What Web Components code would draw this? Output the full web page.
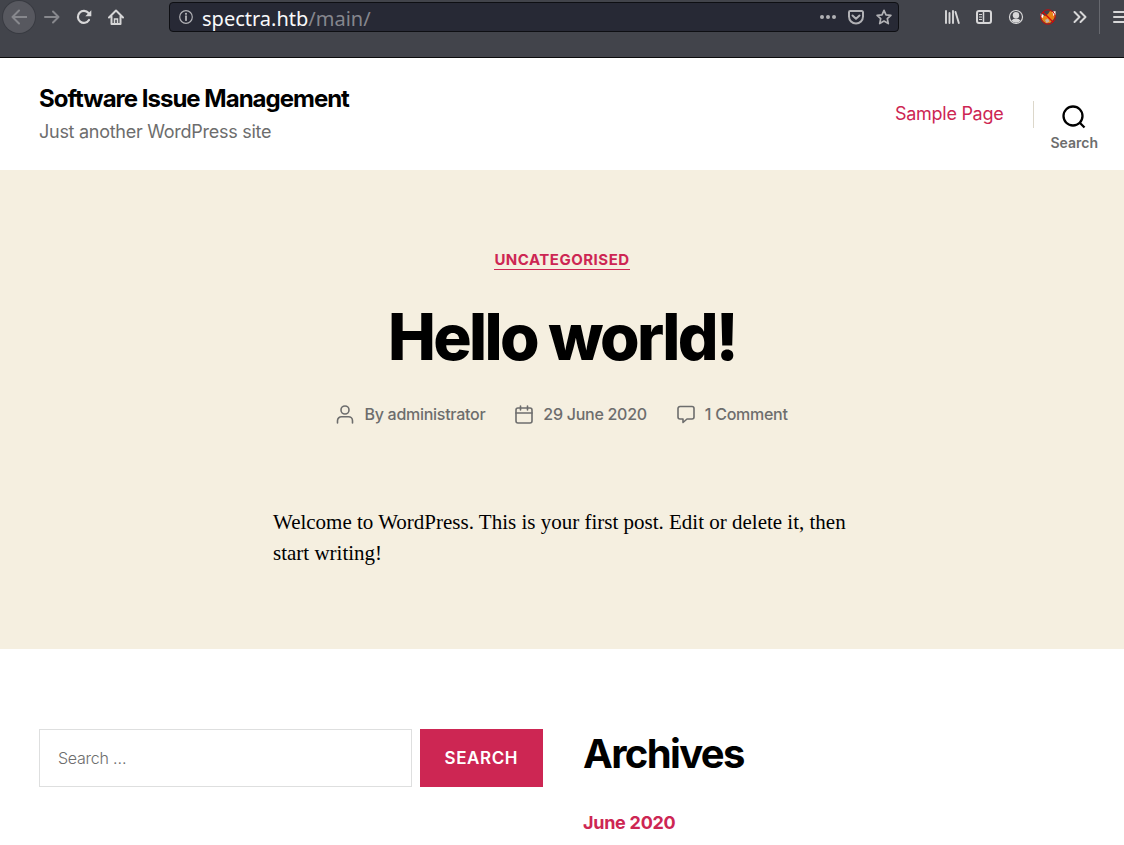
<!DOCTYPE html>
<html lang="en">
<head>
<meta charset="utf-8">
<meta name="viewport" content="width=device-width">
<title>Software Issue Management</title>
<style>
  html { background: #fff; }
  body { margin: 0; overflow-x: hidden; color: #000; font-family: Inter, "Liberation Sans", sans-serif; font-size: 18px; letter-spacing: -0.015em; --accent: #cd2653; --muted: #6d6d6d; --line: #dcd7ca; --cream: #f5efe0; }
</style>
</head>
<body>
<browser-bar></browser-bar>
<site-header heading="Software Issue Management" tagline="Just another WordPress site">
  <nav-link href="#sample">Sample Page</nav-link>
</site-header>
<main>
  <blog-post heading="Hello world!" category="Uncategorised">
    <post-meta slot="meta" icon="user" href="#author" prefix="By ">administrator</post-meta>
    <post-meta slot="meta" icon="calendar" href="#date">29 June 2020</post-meta>
    <post-meta slot="meta" icon="comment" href="#comments">1 Comment</post-meta>
    Welcome to WordPress. This is your first post. Edit or delete it, then start writing!
  </blog-post>
</main>
<footer-widgets>
  <search-form slot="first"></search-form>
  <link-widget slot="second" heading="Archives"><nav-link strong href="#2020-06">June 2020</nav-link></link-widget>
</footer-widgets>

<script>
class Base extends HTMLElement {
  connectedCallback() {
    if (this.shadowRoot) return;
    this.attachShadow({ mode: 'open' }).innerHTML = `<style>*{box-sizing:border-box}a{color:inherit;text-decoration:none}h1,h2,p{margin:0}button{font:inherit;color:inherit;background:none;border:0;padding:0;cursor:pointer}svg{display:block;flex:none}</style>` + this.render();
  }
  attr(n) { return this.getAttribute(n) || ''; }
}

customElements.define('tool-button', class extends Base {
  render() {
    const icons = {
      back: '<g fill="none" stroke="#87888d" stroke-width="2" stroke-linecap="round" stroke-linejoin="round"><path d="M1.500 8h14M8 1.500L1.500 8 8 14.500"/></g>',
      forward: '<g fill="none" stroke="#87888d" stroke-width="2" stroke-linecap="round" stroke-linejoin="round"><path d="M1 8h13.500M9 2.500L14.500 8 9 13.500"/></g>',
      reload: '<path d="M13 11A6 6 0 1 1 12.500 4" fill="none" stroke="#d7d7d8" stroke-width="2.200" stroke-linecap="round"/><path d="M15.300 1.200v6h-6z" fill="#d7d7d8"/>',
      home: '<path d="M1 8.500L8 1.500l7 7M3.500 7.500V15h9V7.500" fill="none" stroke="#d7d7d8" stroke-width="2" stroke-linecap="round" stroke-linejoin="round"/><path d="M6.500 15v-5h3v5" fill="none" stroke="#d7d7d8" stroke-width="1.500"/>',
      more: '<g fill="#b1b1b5"><circle cx="2" cy="8" r="2"/><circle cx="8" cy="8" r="2"/><circle cx="14" cy="8" r="2"/></g>',
      pocket: '<path d="M2.200 2h11.600a1.200 1.200 0 0 1 1.200 1.200V7.500a7 7 0 0 1-14 0V3.200A1.200 1.200 0 0 1 2.200 2zM4.500 6.500L8 9.800l3.500-3.300" fill="none" stroke="#b1b1b5" stroke-width="2" stroke-linecap="round" stroke-linejoin="round"/>',
      star: '<path d="M8 1.300l2 4.500 4.900.5-3.600 3.300 1 5L8 12.100l-4.300 2.500 1-5L1.100 6.300 6 5.800z" fill="none" stroke="#b1b1b5" stroke-width="1.700" stroke-linejoin="round"/>',
      library: '<path d="M2 2v12M5.500 4v10M9 2v12M11.500 3l3.300 11" fill="none" stroke="#d7d7d8" stroke-width="1.900" stroke-linecap="round"/>',
      sidebar: '<rect x="1" y="2" width="14" height="12" rx="2" fill="none" stroke="#d7d7d8" stroke-width="2"/><path d="M7.500 2v12" stroke="#d7d7d8" stroke-width="1.500"/><path d="M3 5.500h3M3 8h3M3 10.500h3" stroke="#d7d7d8"/>',
      account: '<circle cx="8" cy="8" r="6.500" fill="none" stroke="#d7d7d8" stroke-width="1.200"/><circle cx="8" cy="6.300" r="3.200" fill="#d7d7d8"/><path d="M3.500 11.500q1.500-2 4.500-2t4.500 2q-1.700 2.200-4.500 2.200t-4.500-2.200z" fill="#d7d7d8"/>',
      fox: '<path d="M1 5l4 2 3-2 2-3 3 1 2-1 .5 5-2.500 4-3 3-4 .5-3-2.500-2-3z" fill="#e98216"/><path d="M.5 4.500L3.500 6 3 9 1 8zM12.500 3l3-1v3.500l-2 1.500z" fill="#fff"/><path d="M5 11l3-1.500 1.500 3-3 1.500z" fill="#c3b3a6"/><circle cx="8" cy="8" r="7.200" fill="none" stroke="#cf0909" stroke-width="1"/><path d="M3 3l10 10" stroke="#cf0909" stroke-width="1.200"/>',
      chevrons: '<path d="M2.500 3L7.500 8l-5 5M8.500 3l5 5-5 5" fill="none" stroke="#d7d7d8" stroke-width="2" stroke-linecap="round" stroke-linejoin="round"/>',
      menu: '<path d="M2 3h12M2 8h12M2 13h12" stroke="#d7d7d8" stroke-width="2" stroke-linecap="round"/>'
    };
    const k = this.attr('icon');
    return `<style>:host{display:block;flex:none}button{display:grid;place-items:center;width:var(--tool,32px);height:32px;border-radius:50%}
      :host([round]) button{background:#57585f;box-shadow:0 0 0 1px #393b42}</style>
      <button type="button" aria-label="${this.attr('label')}"><svg width="16" height="16" viewBox="0 0 16 16">${icons[k]}</svg></button>`;
  }
});

customElements.define('address-field', class extends Base {
  render() {
    return `<style>:host{display:flex;flex:1;align-items:center;height:30px;min-width:0;background:#272935;border:1px solid #0e0f13;border-radius:4px;padding:0 0 0 9px;--tool:28px;overflow:hidden}
      p{flex:1;margin-left:9px;font:20px/28px "Noto Sans",sans-serif;letter-spacing:normal;color:#f9f9fa;white-space:nowrap;padding-top:4px}span{color:#85868d}</style>
      <svg width="14" height="14" viewBox="0 0 14 14"><circle cx="7" cy="7" r="6.300" fill="none" stroke="#b1b1b5" stroke-width="1.200"/><path d="M7 6.200v4" stroke="#b1b1b5" stroke-width="1.800" stroke-linecap="round"/><circle cx="7" cy="3.800" r="1.100" fill="#b1b1b5"/></svg>
      <p>spectra.htb<span>/main/</span></p>
      <tool-button icon="more" label="Page actions"></tool-button><tool-button icon="pocket" label="Save to Pocket"></tool-button><tool-button icon="star" label="Bookmark"></tool-button>`;
  }
});

customElements.define('browser-bar', class extends Base {
  render() {
    return `<style>:host{display:block;background:#42444b;border-bottom:1px solid #0c0c0d;overflow:hidden;padding-bottom:23px}
      div{display:flex}.bar{height:34px;padding-left:3px;margin-right:-12px;align-items:center}.nav{margin-right:37px}.nav [round]{margin-right:1px}.tools{margin-left:37px;align-items:center}.tools i{width:1px;height:34px;margin:0 4px 0 3px;background:#66686e}</style>
      <div class="bar"><div class="nav"><tool-button round icon="back" label="Back"></tool-button><tool-button icon="forward" label="Forward"></tool-button><tool-button icon="reload" label="Reload"></tool-button><tool-button icon="home" label="Home"></tool-button></div>
      <address-field></address-field>
      <div class="tools"><tool-button icon="library" label="Library"></tool-button><tool-button icon="sidebar" label="Sidebars"></tool-button><tool-button icon="account" label="Account"></tool-button><tool-button icon="fox" label="Proxy"></tool-button><tool-button icon="chevrons" label="More tools"></tool-button><i></i><tool-button icon="menu" label="Menu"></tool-button></div></div>`;
  }
});

customElements.define('nav-link', class extends Base {
  render() {
    return `<style>:host{display:block;font-size:18px;line-height:24px;color:var(--accent)}:host([strong]){font-weight:700}</style><a href="${this.attr('href')}"><slot></slot></a>`;
  }
});

customElements.define('site-header', class extends Base {
  render() {
    return `<style>:host{display:flex;align-items:center;justify-content:space-between;min-height:112px;padding:0 26px 0 39px;background:#fff}
      h1{font-size:24px;line-height:30px;font-weight:700;letter-spacing:-0.0415625em}
      p{font-size:18px;line-height:24px;margin-top:6px;color:var(--muted);font-weight:400}
      nav{display:flex;align-items:center}i{width:1px;height:27px;background:var(--line);margin:0 16px 0 30px}
      button{display:flex;flex-direction:column;align-items:center;gap:5px;font-size:14px;line-height:18px;font-weight:600;color:var(--muted);margin-top:28px}</style>
      <div><h1><a href="#home">${this.attr('heading')}</a></h1><p>${this.attr('tagline')}</p></div>
      <nav><slot></slot><i></i><button type="button"><svg width="24" height="24" viewBox="0 0 24 24"><circle cx="11" cy="11" r="9.500" fill="none" stroke="#000" stroke-width="2.300"/><path d="M18 18l4.500 4.500" stroke="#000" stroke-width="2.300"/></svg>Search</button></nav>`;
  }
});

customElements.define('post-meta', class extends Base {
  render() {
    const icons = {
      user: '<path d="M1.500 18v-2.300a4 4 0 0 1 4-4h7a4 4 0 0 1 4 4V18"/><circle cx="9" cy="5" r="4"/>',
      calendar: '<rect x="1" y="3" width="16" height="15" rx="2"/><path d="M1 8h16M5.500 1v4M12.500 1v4"/>',
      comment: '<path d="M3 1.500h12a2 2 0 0 1 2 2v8.500a2 2 0 0 1-2 2H10l-4 3.500V14H3a2 2 0 0 1-2-2V3.500a2 2 0 0 1 2-2z"/>'
    };
    return `<style>:host{display:flex;align-items:center;gap:10px;font-size:16px;line-height:24px;font-weight:500;color:var(--muted)}svg{margin-top:1px}</style>
      <svg width="18" height="19" viewBox="0 0 18 19" fill="none" stroke="#6d6d6d" stroke-width="1.600" stroke-linecap="round" stroke-linejoin="round">${icons[this.attr('icon')]}</svg><span>${this.attr('prefix')}<a href="${this.attr('href')}"><slot></slot></a></span>`;
  }
});

customElements.define('blog-post', class extends Base {
  render() {
    return `<style>:host{display:block;background:var(--cream);padding:80px 20px;text-align:center}
      .cat{display:inline-block;font-size:15px;line-height:19px;font-weight:700;letter-spacing:0.0333em;text-transform:uppercase;color:var(--accent);border-bottom:1px solid}
      header{display:flex;flex-direction:column;align-items:center}
      h1{font-size:64px;line-height:70px;font-weight:800;letter-spacing:-0.0415625em;margin-top:32px}
      .meta{display:flex;flex-wrap:wrap;justify-content:center;gap:30px;margin-top:30px}
      .body{max-width:578px;margin:81px auto 0;text-align:left;font:21px/31px "Liberation Serif",serif;letter-spacing:normal}</style>
      <article><header><a class="cat" href="#category">${this.attr('category')}</a><h1>${this.attr('heading')}</h1><div class="meta"><slot name="meta"></slot></div></header><div class="body"><slot></slot></div></article>`;
  }
});

customElements.define('search-form', class extends Base {
  render() {
    return `<style>:host{display:block}form{display:flex;gap:8px}
      input{flex:1;min-width:0;height:58px;border:1px solid #dedfdf;border-radius:0;background:#fff;padding:0 18px;font:300 16px Inter,sans-serif;letter-spacing:-0.015em;color:#000}
      input::placeholder{color:#6d6d6d;opacity:1}
      button{height:58px;padding:0 25px;background:var(--accent);color:#fff;font-size:17px;font-weight:600;letter-spacing:0.0333em;text-transform:uppercase}</style>
      <form role="search" onsubmit="return false"><input type="search" aria-label="Search for:" placeholder="Search …"><button>Search</button></form>`;
  }
});

customElements.define('link-widget', class extends Base {
  render() {
    return `<style>:host{display:block}h2{font-size:40px;line-height:50px;font-weight:700;letter-spacing:-0.0415625em;margin-bottom:32px}</style><h2>${this.attr('heading')}</h2><slot></slot>`;
  }
});

customElements.define('footer-widgets', class extends Base {
  render() {
    return `<style>:host{display:block;background:#fff;padding:80px 37px 0 39px}div{display:grid;grid-template-columns:1fr 1fr;gap:40px}</style><div><slot name="first"></slot><slot name="second"></slot></div>`;
  }
});
</script>
</body>
</html>
